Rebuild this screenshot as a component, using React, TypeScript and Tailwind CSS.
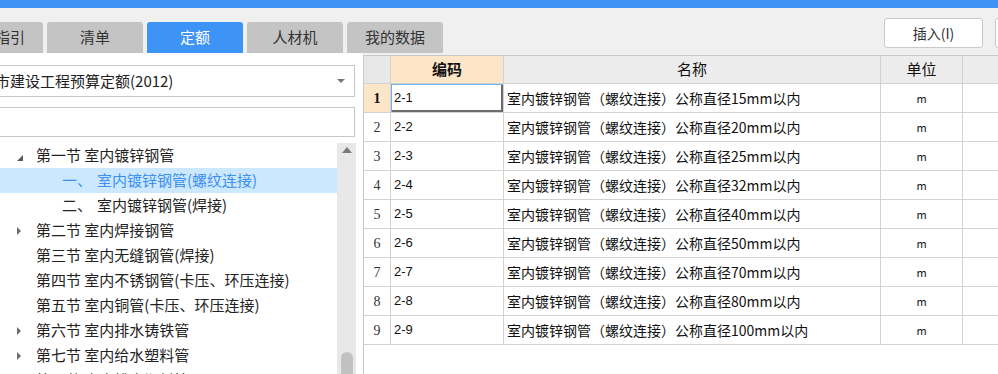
const FONT = "font-['Noto_Sans_CJK_SC','Noto_Sans',sans-serif]";

const tabs = [
  { label: '清单指引', active: false },
  { label: '清单', active: false },
  { label: '定额', active: true },
  { label: '人材机', active: false },
  { label: '我的数据', active: false },
];

type TreeRow = { label: string; tri?: 'open' | 'closed'; sub?: string; selected?: boolean };

const tree: TreeRow[] = [
  { label: '第一节 室内镀锌钢管', tri: 'open' },
  { sub: '一、', label: '室内镀锌钢管(螺纹连接)', selected: true },
  { sub: '二、', label: '室内镀锌钢管(焊接)' },
  { label: '第二节 室内焊接钢管', tri: 'closed' },
  { label: '第三节 室内无缝钢管(焊接)' },
  { label: '第四节 室内不锈钢管(卡压、环压连接)' },
  { label: '第五节 室内铜管(卡压、环压连接)' },
  { label: '第六节 室内排水铸铁管', tri: 'closed' },
  { label: '第七节 室内给水塑料管', tri: 'closed' },
  { label: '第八节 室内排水塑料管', tri: 'closed' },
];

const sizes = ['15', '20', '25', '32', '40', '50', '70', '80', '100'];

function Triangle({ kind }: { kind: 'open' | 'closed' }) {
  if (kind === 'open') {
    return (
      <svg width="8" height="8" viewBox="0 0 8 8" className="mt-[4px]">
        <polygon points="7,1 7,7 1,7" fill="#595959" />
      </svg>
    );
  }
  return (
    <svg width="6" height="10" viewBox="0 0 6 10">
      <polygon points="1,1 5,5 1,9" fill="#6b6b6b" />
    </svg>
  );
}

export default function App() {
  return (
    <div className={`w-[998px] h-[374px] overflow-hidden bg-[#f0f0f0] flex flex-col ${FONT}`}>
      <div className="h-[8px] bg-[#3d94f6] shrink-0" />

      {/* tab strip + toolbar */}
      <div className="h-[45px] shrink-0 flex items-start">
        <div className="flex gap-[4px] -ml-[53px] mt-[14px]">
          {tabs.map((t) => (
            <div
              key={t.label}
              className={`w-[96px] h-[31px] rounded-t-[3px] flex items-center justify-center text-[15px] ${
                t.active ? 'bg-[#3d94f6] text-white' : 'bg-[#c4c4c4] text-[#333]'
              }`}
            >
              {t.label}
            </div>
          ))}
        </div>
        <div className="ml-auto flex gap-[12px] mt-[10px] -mr-[96px]">
          <button className="w-[99px] h-[30px] bg-white border border-[#c9c9c9] rounded-[3px] text-[14px] text-[#333]">
            插入(I)
          </button>
          <button className="w-[99px] h-[30px] bg-white border border-[#c9c9c9] rounded-[3px] text-[14px] text-[#333]">
            替换(R)
          </button>
        </div>
      </div>

      <div className="flex flex-1 min-h-0">
        {/* left panel */}
        <div className="w-[363px] bg-white flex flex-col shrink-0">
          <div className="mt-[12px] -ml-px w-[356px] h-[32px] border border-[#c6c6c6] flex items-center text-[15px] text-[#222]">
            <span className="-ml-[5px]">市建设工程预算定额(2012)</span>
            <svg width="8" height="5" viewBox="0 0 8 5" className="ml-auto mr-[9px]">
              <polygon points="0,0 8,0 4,4" fill="#777" />
            </svg>
          </div>
          <div className="mt-[10px] -ml-px w-[356px] h-[30px] border border-[#c6c6c6]" />
          <div className="mt-[6px] flex flex-1 min-h-0">
            <div className="w-[337px] overflow-hidden">
              {tree.map((r) => (
                <div
                  key={r.label}
                  className={`h-[25px] flex items-center text-[15px] whitespace-nowrap ${
                    r.selected ? 'bg-[#cce8ff] text-[#3d8ff0]' : 'text-[#222]'
                  }`}
                >
                  <div className="w-[36px] shrink-0 flex items-center pl-[16px]">
                    {r.tri && <Triangle kind={r.tri} />}
                  </div>
                  {r.sub ? (
                    <>
                      <span className="ml-[26px] w-[35px]">{r.sub}</span>
                      <span>{r.label}</span>
                    </>
                  ) : (
                    <span>{r.label}</span>
                  )}
                </div>
              ))}
            </div>
            <div className="w-[19px] bg-[#e8e8e8] flex flex-col items-center">
              <svg width="10" height="6" viewBox="0 0 10 6" className="mt-[4px]">
                <polygon points="0,6 10,6 5,0" fill="#7a7a7a" />
              </svg>
              <div className="mt-auto w-[12px] h-[26px] -mb-[4px] rounded-full bg-[#c1c1c1]" />
            </div>
          </div>
        </div>

        {/* right grid */}
        <div className="flex-1 pt-[2px]">
          <div className="h-full bg-white border-l border-t border-[#c8c8c8] text-[#111]">
            <div className="flex h-[28px] border-b border-[#d2d2d2] text-[15px]">
              <div className="w-[27px] bg-[#e8e8e8] border-r border-[#d2d2d2]" />
              <div className="w-[113px] bg-[#fde5c8] border-r border-[#d2d2d2] flex items-center justify-center font-bold">
                编码
              </div>
              <div className="w-[377px] bg-[#ececec] border-r border-[#d2d2d2] flex items-center justify-center">
                名称
              </div>
              <div className="w-[82px] bg-[#ececec] border-r border-[#d2d2d2] flex items-center justify-center">
                单位
              </div>
              <div className="flex-1 bg-[#ececec]" />
            </div>
            {sizes.map((s, i) => (
              <div key={s} className="flex h-[29px] border-b border-[#d2d2d2] text-[14px]">
                <div
                  className={`w-[27px] border-r border-[#d2d2d2] flex items-center justify-center font-['Liberation_Serif',serif] text-[14px] ${
                    i === 0 ? 'bg-[#fde5c8] font-bold' : 'text-[#333]'
                  }`}
                >
                  {i + 1}
                </div>
                <div
                  className={`w-[113px] border-r border-[#d2d2d2] flex items-center pl-[3px] font-['Liberation_Sans',sans-serif] text-[13px] ${
                    i === 0 ? 'shadow-[inset_1px_1px_0_#6fb1f7,inset_-2px_-2px_0_#6b6b6b]' : ''
                  }`}
                >
                  2-{i + 1}
                </div>
                <div className="w-[377px] border-r border-[#d2d2d2] flex items-center pl-[3px] whitespace-nowrap">
                  室内镀锌钢管（螺纹连接）公称直径{s}mm以内
                </div>
                <div className="w-[82px] border-r border-[#d2d2d2] flex items-center justify-center text-[11px]">
                  m
                </div>
                <div className="flex-1" />
              </div>
            ))}
          </div>
        </div>
      </div>
    </div>
  );
}
